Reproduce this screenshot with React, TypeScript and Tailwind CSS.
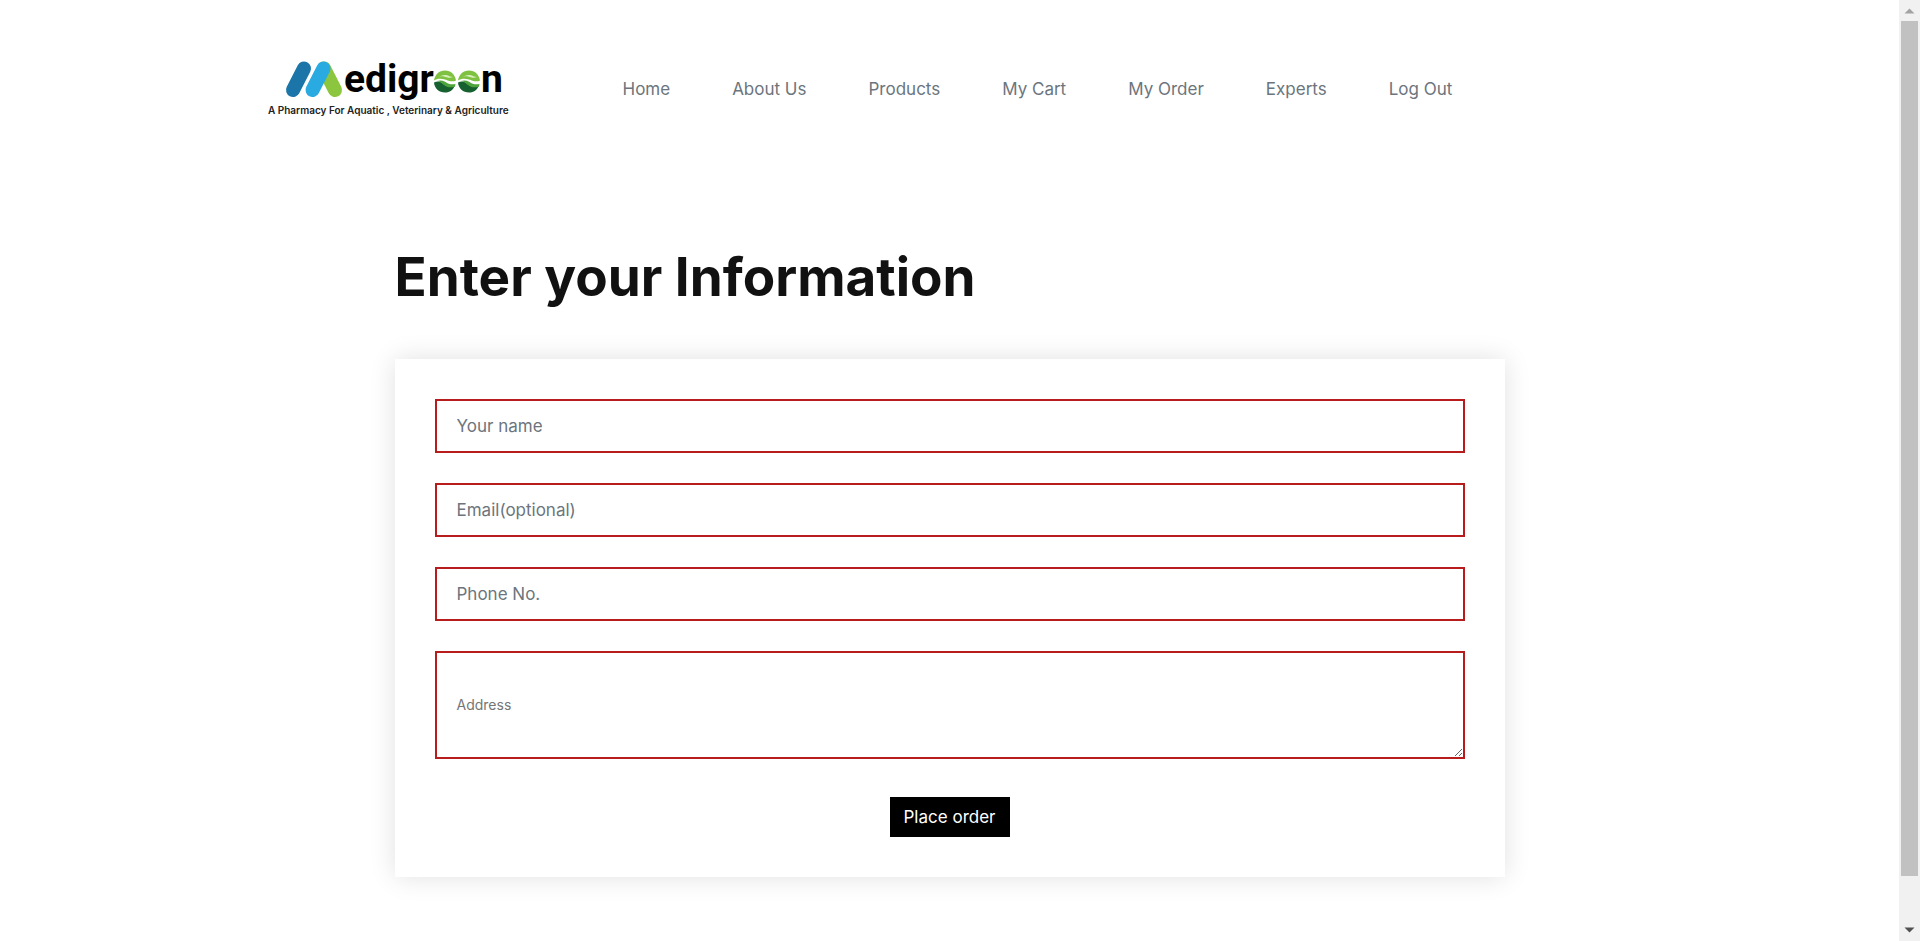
import React from "react";

const links = ["Home", "About Us", "Products", "My Cart", "My Order", "Experts", "Log Out"];

const fieldClass =
  "block w-full rounded-none border-2 border-[#b91c1c] bg-white px-5 text-[#495057] outline-none";
const inputClass = `${fieldClass} h-[54px] text-[17px] placeholder:text-[#6c757d]`;

function LeafLetter({ x }: { x: number }) {
  return (
    <g transform={`translate(${x} 31.500)`}>
      <path d="M-11 -1C-10 -7 -6 -11 0 -11C6 -11 10 -7 11 -1C7 1 3 -1 0 -2C-4 -3 -8 -3 -11 -1Z" fill="#7fc241" />
      <path d="M-7 -4.500C-4 -5 -3 -7 1 -6.500C4 -6 5 -4.500 8 -4.500C5 -3 2 -4 -1 -5C-4 -5.500 -5 -4.500 -7 -4.500Z" fill="#d9efbf" />
      <path d="M-11 1C-7 -1 -4 0 -1 3C2 5.500 6 5 10 4C8 8.500 5 11 0 11C-6 11 -10.500 7 -11 1Z" fill="#17602f" />
      <path d="M-8 -0.500C-3 -2 0 0 3 2C6 3 8 3 10.500 2.500L10 5C6 6.500 2 6 -1 3.500C-3 1.500 -5 0 -8 -0.500Z" fill="#4fa53c" />
    </g>
  );
}

function Logo() {
  return (
    <svg viewBox="0 0 270 75" className="w-[270px] shrink-0" role="img" aria-label="Medigreen">
      <g fill="none" strokeLinecap="round" strokeWidth="14">
        <path d="M64 18.500L75 40" stroke="#8cc63f" />
        <path d="M33 40L44 18.500" stroke="#1b75a8" />
        <path d="M52.500 40L63.500 18.500" stroke="#29abe2" />
      </g>
      <text x="84" y="42" fontSize="39" fontWeight="700" fontFamily="Roboto, sans-serif">edigr</text>
      <LeafLetter x={185} />
      <LeafLetter x={209} />
      <text x="221" y="42" fontSize="39" fontWeight="700" fontFamily="Roboto, sans-serif">n</text>
      <text x="8" y="64" fontSize="10" fontWeight="600" fontFamily="Inter, sans-serif" fill="#222">
        A Pharmacy For Aquatic , Veterinary &amp; Agriculture
      </text>
    </svg>
  );
}

function ScrollRail() {
  return (
    <div aria-hidden="true" className="sticky top-0 flex h-screen w-[21px] shrink-0 flex-col items-center bg-[#f1f1f1]">
      <svg viewBox="0 0 21 21" className="h-[21px] w-[21px] shrink-0">
        <path d="M5.500 13.500L10.500 8.500L15.500 13.500Z" fill="#a3a3a3" />
      </svg>
      <div className="w-[17px] grow bg-[#c1c1c1]" />
      <div className="h-11 shrink-0" />
      <svg viewBox="0 0 21 21" className="h-[21px] w-[21px] shrink-0">
        <path d="M5.500 7.500L10.500 12.500L15.500 7.500Z" fill="#505050" />
      </svg>
    </div>
  );
}

export default function App() {
  return (
    <div className="flex min-h-screen bg-white font-['Inter',sans-serif] text-[#111111]">
      <div className="min-w-0 grow pb-16">
        <header className="mx-auto flex max-w-[1380px] flex-wrap items-center gap-x-[93px] pt-[50px]">
          <a href="#home">
            <Logo />
          </a>
          <nav className="pt-0.5">
            <ul className="flex flex-wrap gap-x-[62px] gap-y-2">
              {links.map((label) => (
                <li key={label}>
                  <a href="#" className="text-[17px] leading-6 text-[#6c757d]">
                    {label}
                  </a>
                </li>
              ))}
            </ul>
          </nav>
        </header>

        <main className="mx-auto max-w-[1110px] pt-[122px]">
          <h1 className="text-[53px] leading-[60px] font-bold">Enter your Information</h1>
          <form
            className="mt-[52px] flex flex-col gap-[30px] bg-white p-10 shadow-[0_0_25px_rgba(0,0,0,0.12)]"
            onSubmit={(event) => event.preventDefault()}
          >
            <input aria-label="Your name" type="text" placeholder="Your name" className={inputClass} />
            <input aria-label="Email" type="email" placeholder="Email(optional)" className={inputClass} />
            <input aria-label="Phone number" type="tel" placeholder="Phone No." className={inputClass} />
            <textarea aria-label="Address" placeholder="Address" className={`${fieldClass} h-[108px] resize py-[42px] text-sm leading-5 placeholder:text-[#757575]`} />
            <button type="submit" className="mt-2 h-10 w-[120px] self-center bg-black pt-0.5 text-[17px] text-white">
              Place order
            </button>
          </form>
        </main>
      </div>
      <ScrollRail />
    </div>
  );
}
